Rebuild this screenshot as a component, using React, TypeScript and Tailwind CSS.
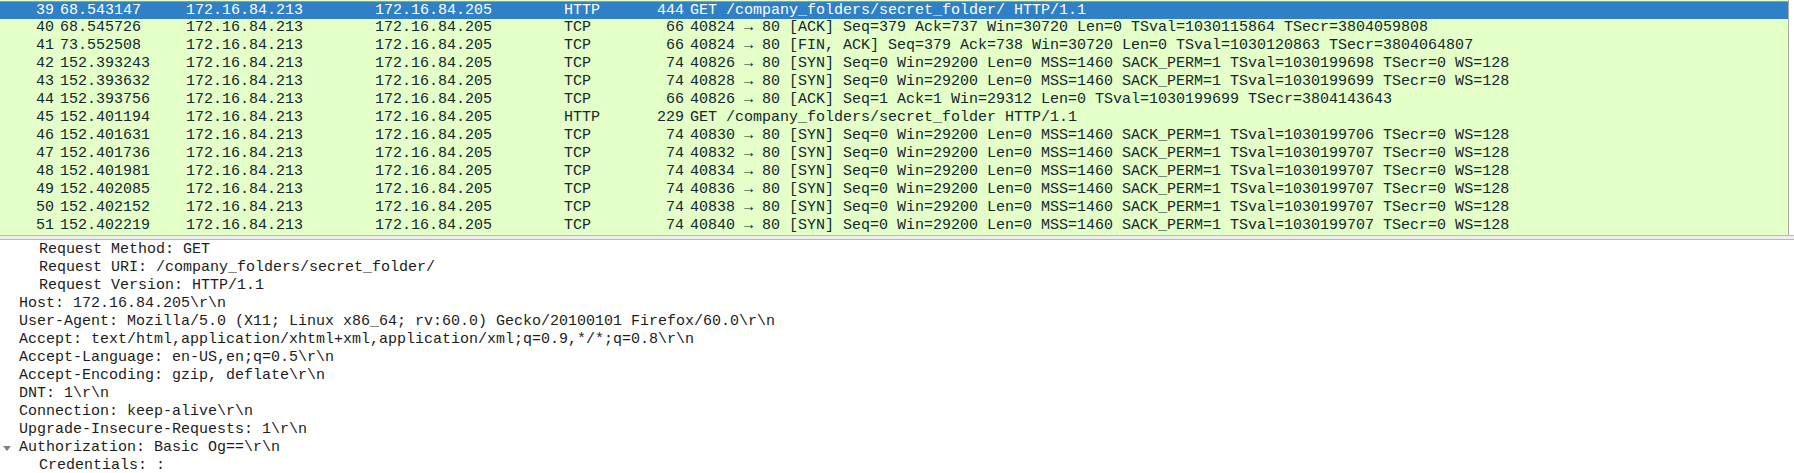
import React from "react";

interface Packet {
  no: number;
  time: string;
  src: string;
  dst: string;
  proto: string;
  len: number;
  info: string;
}

const syn = (port: number, ts: string) =>
  `40${port} → 80 [SYN] Seq=0 Win=29200 Len=0 MSS=1460 SACK_PERM=1 TSval=${ts} TSecr=0 WS=128`;

const packets: Packet[] = [
  { no: 39, time: "68.543147", src: "172.16.84.213", dst: "172.16.84.205", proto: "HTTP", len: 444, info: "GET /company_folders/secret_folder/ HTTP/1.1" },
  { no: 40, time: "68.545726", src: "172.16.84.213", dst: "172.16.84.205", proto: "TCP", len: 66, info: "40824 → 80 [ACK] Seq=379 Ack=737 Win=30720 Len=0 TSval=1030115864 TSecr=3804059808" },
  { no: 41, time: "73.552508", src: "172.16.84.213", dst: "172.16.84.205", proto: "TCP", len: 66, info: "40824 → 80 [FIN, ACK] Seq=379 Ack=738 Win=30720 Len=0 TSval=1030120863 TSecr=3804064807" },
  { no: 42, time: "152.393243", src: "172.16.84.213", dst: "172.16.84.205", proto: "TCP", len: 74, info: syn(826, "1030199698") },
  { no: 43, time: "152.393632", src: "172.16.84.213", dst: "172.16.84.205", proto: "TCP", len: 74, info: syn(828, "1030199699") },
  { no: 44, time: "152.393756", src: "172.16.84.213", dst: "172.16.84.205", proto: "TCP", len: 66, info: "40826 → 80 [ACK] Seq=1 Ack=1 Win=29312 Len=0 TSval=1030199699 TSecr=3804143643" },
  { no: 45, time: "152.401194", src: "172.16.84.213", dst: "172.16.84.205", proto: "HTTP", len: 229, info: "GET /company_folders/secret_folder HTTP/1.1" },
  { no: 46, time: "152.401631", src: "172.16.84.213", dst: "172.16.84.205", proto: "TCP", len: 74, info: syn(830, "1030199706") },
  { no: 47, time: "152.401736", src: "172.16.84.213", dst: "172.16.84.205", proto: "TCP", len: 74, info: syn(832, "1030199707") },
  { no: 48, time: "152.401981", src: "172.16.84.213", dst: "172.16.84.205", proto: "TCP", len: 74, info: syn(834, "1030199707") },
  { no: 49, time: "152.402085", src: "172.16.84.213", dst: "172.16.84.205", proto: "TCP", len: 74, info: syn(836, "1030199707") },
  { no: 50, time: "152.402152", src: "172.16.84.213", dst: "172.16.84.205", proto: "TCP", len: 74, info: syn(838, "1030199707") },
  { no: 51, time: "152.402219", src: "172.16.84.213", dst: "172.16.84.205", proto: "TCP", len: 74, info: syn(840, "1030199707") },
];

interface DetailLine {
  level: number;
  text: string;
  open?: boolean;
}

const details: DetailLine[] = [
  { level: 2, text: "Request Method: GET" },
  { level: 2, text: "Request URI: /company_folders/secret_folder/" },
  { level: 2, text: "Request Version: HTTP/1.1" },
  { level: 1, text: "Host: 172.16.84.205\\r\\n" },
  { level: 1, text: "User-Agent: Mozilla/5.0 (X11; Linux x86_64; rv:60.0) Gecko/20100101 Firefox/60.0\\r\\n" },
  { level: 1, text: "Accept: text/html,application/xhtml+xml,application/xml;q=0.9,*/*;q=0.8\\r\\n" },
  { level: 1, text: "Accept-Language: en-US,en;q=0.5\\r\\n" },
  { level: 1, text: "Accept-Encoding: gzip, deflate\\r\\n" },
  { level: 1, text: "DNT: 1\\r\\n" },
  { level: 1, text: "Connection: keep-alive\\r\\n" },
  { level: 1, text: "Upgrade-Insecure-Requests: 1\\r\\n" },
  { level: 1, text: "Authorization: Basic Og==\\r\\n", open: true },
  { level: 2, text: "Credentials: :" },
];

const PacketRow: React.FC<{ p: Packet; selected: boolean }> = ({ p, selected }) => (
  <div
    className={
      selected
        ? "flex h-[18px] items-center whitespace-pre bg-[#2f80c6] text-white border-t border-[#6aa8dc]"
        : "flex h-[18px] items-center whitespace-pre text-[#12272e]"
    }
  >
    <span className="w-[57px] shrink-0 pr-[3px] text-right">{p.no}</span>
    <span className="w-[126px] shrink-0 pl-[3px]">{p.time}</span>
    <span className="w-[189px] shrink-0 pl-[3px]">{p.src}</span>
    <span className="w-[189px] shrink-0 pl-[3px]">{p.dst}</span>
    <span className="w-[69px] shrink-0 pl-[3px]">{p.proto}</span>
    <span className="w-[54px] shrink-0 text-right">{p.len}</span>
    <span className="pl-[6px]">{p.info}</span>
  </div>
);

export default function App() {
  return (
    <div
      className="h-[473px] w-[1794px] overflow-hidden bg-white text-[15px] leading-[18px]"
      style={{ fontFamily: '"Liberation Mono", "DejaVu Sans Mono", monospace' }}
    >
      <div className="h-[235px] w-[1789px] overflow-hidden border-r border-[#a8a8a8] bg-[#e4ffc7] pt-[1px]">
        {packets.map((p) => (
          <PacketRow key={p.no} p={p} selected={p.no === 39} />
        ))}
      </div>
      <div className="h-[5px] border-y border-[#b9b9b9] bg-[#eeeeee]" />
      <div className="pt-[1px] text-[#1c1c1c]">
        {details.map((d, i) => (
          <div key={i} className="relative flex h-[18px] items-center whitespace-pre">
            {d.open && (
              <svg className="absolute left-[3px] top-[7px]" width="8" height="5" viewBox="0 0 8 5">
                <path d="M0 0 L8 0 L4 5 Z" fill="#808080" />
              </svg>
            )}
            <span className={d.level === 1 ? "pl-[19px]" : "pl-[39px]"}>{d.text}</span>
          </div>
        ))}
      </div>
    </div>
  );
}
